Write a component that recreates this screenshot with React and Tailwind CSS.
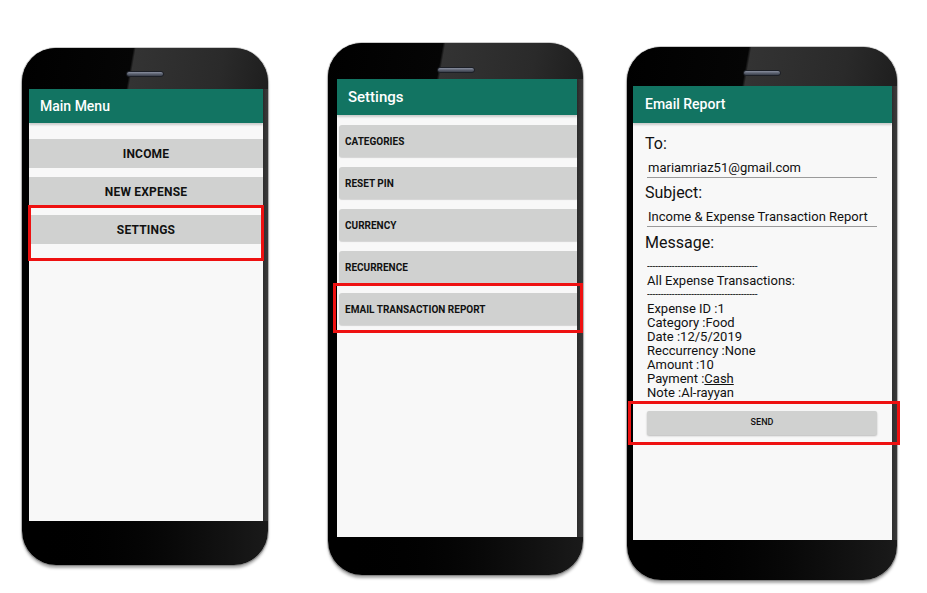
import React from 'react';

const font = { fontFamily: 'Roboto, "Liberation Sans", sans-serif' };

function Speaker({ top }) {
  return (
    <div className={`flex justify-center ${top}`}>
      <div className="h-[6px] w-[38px] rounded-full border border-[#1c1f26] bg-gradient-to-b from-[#8a90a0] via-[#5d6372] to-[#3a3f4a]" />
    </div>
  );
}

function Phone({ outer, topBezel, speakerTop, screenPad, bottomBezel, children, overlay }) {
  return (
    <div className={`relative flex shrink-0 flex-col rounded-[34px] bg-gradient-to-r from-black via-[#050505] to-[#1a1a1a] shadow-[0_3px_3px_rgba(0,0,0,0.35),0_0_0_1px_rgba(150,150,150,0.5)] ${outer}`}>
      <div className={`rounded-t-[34px] bg-[linear-gradient(100deg,#000_0%,#050505_44%,#333_45%,#2a2a2a_80%,#1e1e1e_100%)] ${topBezel}`}>
        <Speaker top={speakerTop} />
      </div>
      <div className={`flex flex-1 flex-col bg-[linear-gradient(90deg,#000_0%,#000_90%,#3a3a3a_100%)] ${screenPad}`}>
        <div className="flex flex-1 flex-col bg-[#f8f8f8]">{children}</div>
      </div>
      <div className={bottomBezel} />
      {overlay}
    </div>
  );
}

function Header({ title, h, size, pl }) {
  return (
    <div className={`flex items-center bg-[#127462] text-white font-medium shadow-[0_2px_2px_rgba(0,0,0,0.18)] ${h} ${size} ${pl}`}>
      {title}
    </div>
  );
}

const mainItems = ['INCOME', 'NEW EXPENSE', 'SETTINGS'];
const settingsItems = ['CATEGORIES', 'RESET PIN', 'CURRENCY', 'RECURRENCE', 'EMAIL TRANSACTION REPORT'];
const messageLines = [
  'Expense ID :1',
  'Category :Food',
  'Date :12/5/2019',
  'Reccurrency :None',
  'Amount :10',
];

function Dashes() {
  return <div className="w-[116px] overflow-hidden whitespace-nowrap text-[10px] leading-[14px]">{'-'.repeat(40)}</div>;
}

export default function App() {
  return (
    <div className="flex h-[593px] w-[927px] items-start overflow-hidden bg-white text-[#111]" style={font}>
      {/* Main menu */}
      <Phone
        outer="ml-[22px] mt-[48px] w-[246px] h-[517px]"
        topBezel="h-[41px]"
        speakerTop="pt-[23px]"
        screenPad="pl-[7px] pr-[5px]"
        bottomBezel="h-[44px]"
        overlay={<div className="absolute left-[6px] top-[157px] h-[56px] w-[236px] border-[3px] border-[#ee1111]" />}
      >
        <Header title="Main Menu" h="h-[34px]" size="text-[14px]" pl="pl-[11px]" />
        <div className="flex flex-col gap-[9px] pt-[16px]">
          {mainItems.map(item => (
            <div key={item} className="flex h-[29px] items-center justify-center bg-[#d0d1d0] text-[12px] font-bold tracking-[0.2px]">
              {item}
            </div>
          ))}
        </div>
      </Phone>

      {/* Settings */}
      <Phone
        outer="ml-[60px] mt-[43px] w-[255px] h-[532px]"
        topBezel="h-[36px]"
        speakerTop="pt-[24px]"
        screenPad="pl-[9px] pr-[6px]"
        bottomBezel="h-[38px]"
        overlay={<div className="absolute left-[5px] top-[240px] h-[50px] w-[250px] border-[3px] border-[#ee1111]" />}
      >
        <Header title="Settings" h="h-[36px]" size="text-[15px]" pl="pl-[11px]" />
        <div className="flex flex-col gap-[10px] pt-[10px] pl-[2px]">
          {settingsItems.map(item => (
            <div key={item} className="flex h-[32px] items-center rounded-l-[3px] bg-[#d0d1d0] pl-[6px] text-[10px] font-bold shadow-[0_1px_1px_rgba(0,0,0,0.15)]">
              {item}
            </div>
          ))}
        </div>
      </Phone>

      {/* Email report */}
      <Phone
        outer="ml-[44px] mt-[47px] w-[270px] h-[533px]"
        topBezel="h-[39px]"
        speakerTop="pt-[23px]"
        screenPad="pl-[6px] pr-[5px]"
        bottomBezel="h-[40px]"
        overlay={<div className="absolute left-[1px] top-[354px] h-[44px] w-[272px] border-[3px] border-[#ee1111]" />}
      >
        <Header title="Email Report" h="h-[37px]" size="text-[14px]" pl="pl-[12px]" />
        <div className="flex flex-col pl-[12px] pr-[15px] pt-[11px]">
          <div className="text-[16px] leading-[20px]">To:</div>
          <div className="ml-[2px] mt-[5px] h-[19px] border-b border-[#9a9a9a] pl-[1px] text-[13px] leading-[18px]">
            mariamriaz51@gmail.com
          </div>
          <div className="mt-[5px] text-[16px] leading-[20px]">Subject:</div>
          <div className="ml-[2px] mt-[5px] h-[19px] border-b border-[#9a9a9a] pl-[1px] text-[13px] leading-[18px]">
            Income &amp; Expense Transaction Report
          </div>
          <div className="mt-[6px] text-[16px] leading-[20px]">Message:</div>
          <div className="ml-[2px] mt-[7px] text-[13px] leading-[14px]">
            <Dashes />
            <div>All Expense Transactions:</div>
            <Dashes />
            {messageLines.map(line => (
              <div key={line}>{line}</div>
            ))}
            <div>
              Payment :<span className="underline">Cash</span>
            </div>
            <div>Note :Al-rayyan</div>
          </div>
          <div className="ml-[2px] mt-[11px] flex h-[24px] items-center justify-center rounded-[2px] bg-[#d0d1d0] text-[9px] font-medium shadow-[0_1px_2px_rgba(0,0,0,0.25)]">
            SEND
          </div>
        </div>
      </Phone>
    </div>
  );
}
